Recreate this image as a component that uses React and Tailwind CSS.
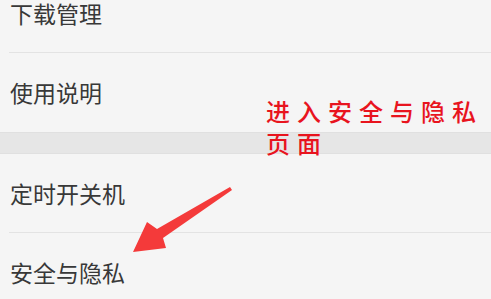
const rowText = "text-[23px] leading-none text-[#383838] font-['Noto_Sans_CJK_SC','Noto_Sans',sans-serif]";

function Row({ label, divider }) {
    return (
        <div className={divider ? "pl-[9px]" : ""}>
            <div className={`h-[79px] flex items-center ${divider ? "border-b border-[#e3e3e3]" : ""}`}>
                <span className={`${rowText} ${divider ? "pl-px" : "pl-[10px]"}`}>{label}</span>
            </div>
        </div>
    );
}

export default function App() {
    return (
        <div className="relative w-[491px] h-[299px] overflow-hidden bg-[#f5f5f5]">
            <div className="flex flex-col -mt-[26px]">
                <Row label="下载管理" divider />
                <Row label="使用说明" />
                <div className="h-[22px] bg-[#e6e6e6] border-y border-[#e0e0e0]" />
                <Row label="定时开关机" divider />
                <Row label="安全与隐私" />
            </div>

            {/* annotation */}
            <div className="absolute left-[266px] top-[95px] text-[24px] leading-[32px] tracking-[7px] font-medium text-[#e8141e] font-['Noto_Sans_CJK_SC',sans-serif]">
                <div>进入安全与隐私</div>
                <div>页面</div>
            </div>
            <svg className="absolute left-0 top-0" width="491" height="299" viewBox="0 0 491 299">
                <polygon points="230,187 232,190 163,238 166,248 133,252 147,222 157,229" fill="#f43a3a" />
            </svg>
        </div>
    );
}
